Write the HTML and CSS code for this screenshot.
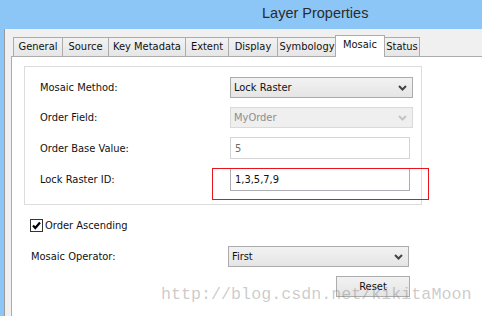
FILE: index.html
```html
<!DOCTYPE html>
<html>
<head>
    <link rel="stylesheet" href="styles.css">
    <title>Layer Properties</title>
</head>
<body>
    <div class="titlebar">Layer Properties</div>

    <div class="client">
        <div class="tabs">
            <div class="tab t-general">General</div>
            <div class="tab t-source">Source</div>
            <div class="tab t-key">Key Metadata</div>
            <div class="tab t-extent">Extent</div>
            <div class="tab t-display">Display</div>
            <div class="tab t-symbology">Symbology</div>
            <div class="tab t-mosaic active">Mosaic</div>
            <div class="tab t-status">Status</div>
        </div>

        <div class="panel">
            <div class="group">
                <div class="row r1">
                    <span class="label">Mosaic Method:</span>
                    <div class="select">
                        <span>Lock Raster</span>
                        <svg class="chev" width="9" height="6" viewBox="0 0 9 6"><path d="M1 1 L4.5 4.5 L8 1" fill="none" stroke="#444" stroke-width="2"/></svg>
                    </div>
                </div>
                <div class="row r2">
                    <span class="label">Order Field:</span>
                    <div class="select disabled">
                        <span>MyOrder</span>
                        <svg class="chev" width="9" height="6" viewBox="0 0 9 6"><path d="M1 1 L4.5 4.5 L8 1" fill="none" stroke="#c4c4c4" stroke-width="2"/></svg>
                    </div>
                </div>
                <div class="row r3">
                    <span class="label">Order Base Value:</span>
                    <div class="textbox disabled">5</div>
                </div>
                <div class="row r4">
                    <span class="label">Lock Raster ID:</span>
                    <div class="textbox">
                        1,3,5,7,9
                        <div class="mark"></div>
                    </div>
                </div>
            </div>

            <div class="check-row">
                <svg class="checkbox" width="13" height="13" viewBox="0 0 13 13">
                    <rect x="0.5" y="0.5" width="12" height="12" fill="#fff" stroke="#333"/>
                    <path d="M3 6.5 L5.3 9 L10 3.5" fill="none" stroke="#000" stroke-width="2.2"/>
                </svg>
                <span>Order Ascending</span>
            </div>

            <div class="op-row">
                <span class="op-label">Mosaic Operator:</span>
                <div class="select op-select">
                    <span>First</span>
                    <svg class="chev" width="9" height="6" viewBox="0 0 9 6"><path d="M1 1 L4.5 4.5 L8 1" fill="none" stroke="#444" stroke-width="2"/></svg>
                </div>
            </div>

            <button class="reset">Reset</button>
        </div>
    </div>

    <!-- blog watermark over the screenshot -->
    <div class="watermark">http://blog.csdn.net/kikitaMoon</div>
</body>
</html>
```

FILE: styles.css
```css
html, body{
    margin: 0;
    height: 100%;
    overflow: hidden;
}

body{
    background-color: #8bc6f7;
    font-family: "DejaVu Sans Condensed", "Liberation Sans", Arial, sans-serif;
    font-size: 11px;
    color: #111;
    position: relative;
}

.titlebar{
    height: 29px;
    line-height: 27px;
    padding-left: 262px;
    font-family: "Liberation Sans", Arial, sans-serif;
    font-size: 14.5px;
    color: #2b2b2b;
    box-sizing: border-box;
}

.client{
    margin-left: 4px;
    border-left: 1px solid #9a9a9a;
    background-color: #f0f0f0;
    height: 287px;
    padding: 6px 0 0 6px;
    box-sizing: border-box;
    overflow: hidden;
}

.tabs{
    display: flex;
    align-items: flex-end;
    height: 21px;
    margin-left: 2px;
    position: relative;
    z-index: 1;
}

.tab{
    height: 19px;
    box-sizing: border-box;
    border: 1px solid #acacac;
    border-bottom: none;
    margin-right: -1px;
    background: linear-gradient(#f2f2f2, #e6e6e6);
    text-align: center;
    line-height: 18px;
    flex-shrink: 0;
    white-space: nowrap;
    overflow: hidden;
}

.t-general{ width: 50px; }
.t-source{ width: 47px; }
.t-key{ width: 78px; }
.t-extent{ width: 44px; }
.t-display{ width: 50px; }
.t-symbology{ width: 60px; }
.t-mosaic{ width: 50px; }
.t-status{ width: 36px; }

.tab.active{
    height: 22px;
    margin-left: -1px;
    margin-bottom: -1px;
    background: #fff;
    line-height: 18px;
}

.panel{
    width: 520px;
    height: 300px;
    border: 1px solid #acacac;
    background-color: #fff;
    box-sizing: border-box;
    padding-top: 9px;
}

.group{
    margin-left: 12px;
    width: 398px;
    height: 139px;
    box-sizing: border-box;
    border: 1px solid #dcdcdc;
    padding: 10px 0 0 15px;
}

.row{
    display: flex;
    align-items: center;
    margin-bottom: 9px;
}

.r1, .r2{ height: 21px; }
.r3{ height: 22px; }
.r4{ height: 23px; }

.label{
    width: 190px;
    flex-shrink: 0;
}

.select{
    width: 183px;
    height: 100%;
    box-sizing: border-box;
    border: 1px solid #acacac;
    background: linear-gradient(#f2f2f2, #e5e5e5);
    display: flex;
    align-items: center;
    justify-content: space-between;
    padding: 0 5px 0 3px;
}

.select.disabled{
    border-color: #d9d9d9;
    background: #efefef;
    color: #8d8d8d;
}

.textbox{
    width: 180px;
    height: 100%;
    box-sizing: border-box;
    border: 1px solid #abadb3;
    background-color: #fff;
    padding-left: 4px;
    display: flex;
    align-items: center;
    position: relative;
}

.textbox.disabled{
    border-color: #d5d5d5;
    color: #6d6d6d;
}

/* red annotation box */
.mark{
    position: absolute;
    left: -19px;
    top: -1px;
    width: 217px;
    height: 32px;
    box-sizing: border-box;
    border: 1px solid #e8141c;
}

.check-row{
    display: flex;
    align-items: center;
    height: 13px;
    margin: 14px 0 0 18px;
    gap: 2px;
}

.op-row{
    display: flex;
    align-items: center;
    height: 21px;
    margin: 14px 0 0 19px;
}

.op-label{
    width: 197px;
    flex-shrink: 0;
}

.op-select{
    width: 181px;
}

.reset{
    display: block;
    margin: 9px 0 0 324px;
    width: 74px;
    height: 21px;
    border: 1px solid #acacac;
    background: linear-gradient(#f2f2f2, #e5e5e5);
    font-family: "DejaVu Sans Condensed", "Liberation Sans", Arial, sans-serif;
    font-size: 11px;
    color: #111;
    padding: 0;
}

.watermark{
    position: absolute;
    left: 161px;
    top: 285px;
    font-family: "Liberation Mono", "Courier New", monospace;
    font-size: 16.7px;
    line-height: 20px;
    color: rgba(130, 130, 130, 0.42);
    white-space: nowrap;
    z-index: 5;
}
```
